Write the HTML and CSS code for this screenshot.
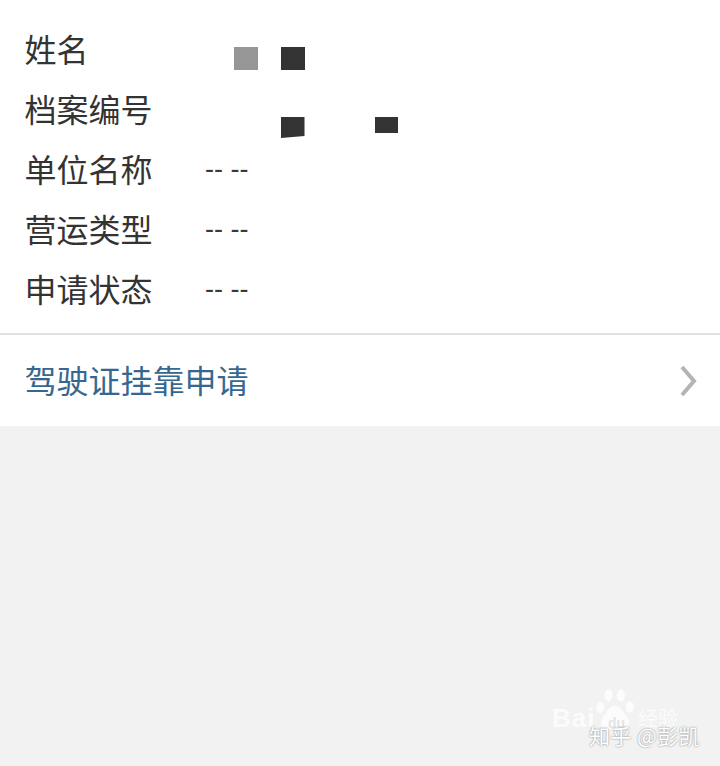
FILE: index.html
```html
<!DOCTYPE html>
<html lang="zh-CN">
<head>
<meta charset="utf-8">
<title>驾驶证挂靠申请</title>
<link rel="stylesheet" href="styles.css">
</head>
<body>
<main class="page">
  <section class="info">
    <div class="row"><span class="label">姓名</span>
      <span class="value redacted-name"><i class="block gray"></i><i class="block dark"></i></span></div>
    <div class="row"><span class="label">档案编号</span>
      <span class="value redacted-id"><i class="block dark tall"></i><i class="block dark short"></i></span></div>
    <div class="row"><span class="label">单位名称</span><span class="value">-- --</span></div>
    <div class="row"><span class="label">营运类型</span><span class="value">-- --</span></div>
    <div class="row"><span class="label">申请状态</span><span class="value">-- --</span></div>
  </section>
  <a class="link-row"><span class="link-text">驾驶证挂靠申请</span>
    <svg class="chevron" width="20" height="34" viewBox="0 0 20 34"><path d="M3 3 L15 17 L3 31" fill="none" stroke="#b4b4b4" stroke-width="4"/></svg>
  </a>
  <div class="watermark">
    <svg class="paw" width="46" height="48" viewBox="0 0 56 56" fill="#fff" opacity=".8">
      <ellipse cx="10" cy="24" rx="5" ry="7"/><ellipse cx="20" cy="9" rx="5" ry="7.5"/><ellipse cx="35" cy="9" rx="5" ry="7.5"/><ellipse cx="46" cy="23" rx="5" ry="7"/>
      <path d="M28 22 C20 22 18 30 13 36 C8 43 12 52 20 51 C25 50 31 50 36 51 C45 52 48 43 43 36 C38 30 36 22 28 22Z"/>
    </svg>
    <span class="wm-baidu">Bai</span><span class="wm-du">du</span><span class="wm-jy">经验</span>
    <span class="wm-zhihu">知乎 @彭凯</span>
  </div>
</main>
</body>
</html>
```
FILE: styles.css
```css
* { box-sizing: border-box; }
html, body { margin: 0; height: 100%; }
body {
  background: #f2f2f2;
  font-family: "Noto Sans CJK SC", "Liberation Sans", sans-serif;
  color: #333;
}
.page { position: relative; width: 720px; height: 766px; overflow: hidden; }
.info {
  background: #fff;
  padding: 18px 0 15px 24.5px;
  border-bottom: 2px solid #e0e0e0;
}
.row { display: flex; align-items: center; height: 60px; }
.label { width: 180.5px; font-size: 32px; line-height: 60px; flex: none; }
.value { font-size: 27px; line-height: 60px; padding-top: 1px; color: #3a3a3a; font-family: "Liberation Sans", sans-serif; }
.redacted-name, .redacted-id { display: flex; align-items: flex-start; height: 60px; }
.redacted-name { padding: 29px 0 0 29px; gap: 23.5px; }
.redacted-id { padding: 39px 0 0 76px; gap: 70px; }
.block { display: block; width: 23.5px; height: 23px; }
.gray { background: #969696; }
.dark { background: #333; }
.tall { height: 21px; clip-path: polygon(0 0, 100% 0, 100% 90%, 0 100%); }
.short { height: 15.5px; }
.link-row {
  display: flex;
  align-items: center;
  justify-content: space-between;
  height: 91px;
  padding: 0 21px 0 24.5px;
  background: #fff;
  color: #36688f;
  font-size: 32px;
}
.link-text { margin-top: -3px; }
.chevron { margin-top: 1px; }
.watermark { position: absolute; left: 550px; top: 684px; width: 170px; height: 70px; color: #fff; }
.watermark span { position: absolute; white-space: nowrap; }
.paw { position: absolute; left: 42px; top: 3px; }
.wm-baidu { left: 2px; top: 19px; font: bold 26px/30px "Liberation Sans", sans-serif; opacity: .75; letter-spacing: 1px; }
.wm-du { left: 58px; top: 31px; font: bold 14px/16px "Liberation Sans", sans-serif; color: #e4e4e4; }
.wm-jy { left: 88px; top: 22px; font-size: 20px; line-height: 24px; opacity: .75; }
.wm-zhihu { left: 39px; top: 38px; font-size: 21px; line-height: 26px; letter-spacing: .4px; text-shadow: 0 0 2px #777; color: #fff; }
```
